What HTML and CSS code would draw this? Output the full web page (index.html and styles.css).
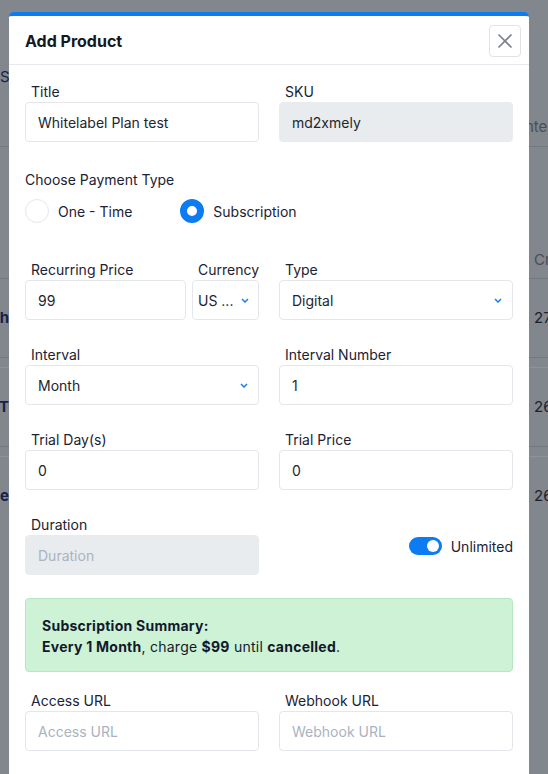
FILE: index.html
```html
<!DOCTYPE html>
<html lang="en">
<head>
  <meta charset="utf-8">
  <meta name="viewport" content="width=device-width, initial-scale=1">
  <title>Add Product</title>
  <link rel="stylesheet" href="styles.css">
</head>
<body>
  <!-- page behind the dialog, dimmed -->
  <div class="backdrop">
    <div class="bg-row row-s"><span class="bg-start">Se</span></div>
    <div class="bg-row row-nte"><span></span><span class="bg-right wide muted">nte</span></div>
    <div class="bg-line line-1"></div>
    <div class="bg-row row-head"><span></span><span class="bg-right muted">Cr</span></div>
    <div class="bg-line line-2"></div>
    <div class="bg-row row-data"><span class="bg-left"><span>Growth</span></span><span class="bg-right">27</span></div>
    <div class="bg-line line-3"></div>
    <div class="bg-line line-4"></div>
    <div class="bg-row row-data2"><span class="bg-left"><span>Test T</span></span><span class="bg-right">26</span></div>
    <div class="bg-line line-3"></div>
    <div class="bg-line line-4"></div>
    <div class="bg-row row-data2"><span class="bg-left"><span>Free</span></span><span class="bg-right">26</span></div>
  </div>

  <div class="modal">
    <div class="modal-header">
      <h2 class="modal-title">Add Product</h2>
      <button class="close-btn" aria-label="Close">
        <svg width="16" height="16" viewBox="0 0 16 16"><path d="M1.5 1.5 L14.5 14.5 M14.5 1.5 L1.5 14.5" stroke="#7b8189" stroke-width="1.6" fill="none"/></svg>
      </button>
    </div>

    <div class="modal-body">
      <div class="grid-2">
        <div class="field">
          <label class="label">Title</label>
          <div class="input">Whitelabel Plan test</div>
        </div>
        <div class="field">
          <label class="label">SKU</label>
          <div class="input disabled">md2xmely</div>
        </div>
      </div>

      <div class="payment">
        <div class="label flush">Choose Payment Type</div>
        <div class="radios">
          <div class="radio-item"><span class="radio"></span>One - Time</div>
          <div class="radio-item"><span class="radio checked"></span>Subscription</div>
        </div>
      </div>

      <div class="grid-2 row row-first">
        <div class="price-row">
          <div class="field grow">
            <label class="label">Recurring Price</label>
            <div class="input">99</div>
          </div>
          <div class="field currency">
            <label class="label">Currency</label>
            <div class="input select small">US ...
              <svg class="chev" width="8" height="5" viewBox="0 0 8 5"><path d="M1 1 L4 4 L7 1" stroke="#1a7df0" stroke-width="1.5" fill="none"/></svg>
            </div>
          </div>
        </div>
        <div class="field">
          <label class="label">Type</label>
          <div class="input select">Digital
            <svg class="chev" width="8" height="5" viewBox="0 0 8 5"><path d="M1 1 L4 4 L7 1" stroke="#1a7df0" stroke-width="1.5" fill="none"/></svg>
          </div>
        </div>
      </div>

      <div class="grid-2 row">
        <div class="field">
          <label class="label">Interval</label>
          <div class="input select">Month
            <svg class="chev" width="8" height="5" viewBox="0 0 8 5"><path d="M1 1 L4 4 L7 1" stroke="#1a7df0" stroke-width="1.5" fill="none"/></svg>
          </div>
        </div>
        <div class="field">
          <label class="label">Interval Number</label>
          <div class="input">1</div>
        </div>
      </div>

      <div class="grid-2 row">
        <div class="field">
          <label class="label">Trial Day(s)</label>
          <div class="input">0</div>
        </div>
        <div class="field">
          <label class="label">Trial Price</label>
          <div class="input">0</div>
        </div>
      </div>

      <div class="grid-2 row">
        <div class="field">
          <label class="label">Duration</label>
          <div class="input disabled placeholder">Duration</div>
        </div>
        <div class="toggle-wrap">
          <span class="toggle"><span class="knob"></span></span>
          <span class="toggle-text">Unlimited</span>
        </div>
      </div>

      <div class="summary">
        <div class="summary-title">Subscription Summary:</div>
        <div><b>Every 1 Month</b>, charge <b>$99</b> until <b>cancelled</b>.</div>
      </div>

      <div class="grid-2 row-url">
        <div class="field">
          <label class="label">Access URL</label>
          <div class="input placeholder">Access URL</div>
        </div>
        <div class="field">
          <label class="label">Webhook URL</label>
          <div class="input placeholder">Webhook URL</div>
        </div>
      </div>
    </div>
  </div>
</body>
</html>
```

FILE: styles.css
```css
body {
  margin: 0;
  width: 548px;
  height: 774px;
  overflow: hidden;
  background-color: #82868d;
  font-family: Inter, "Noto Sans", sans-serif;
  font-size: 14px;
  color: #1e2430;
  position: relative;
}

/* dimmed page behind */
.backdrop {
  display: flex;
  flex-direction: column;
  color: #14192e;
  font-size: 15px;
}
.bg-row {
  display: flex;
  justify-content: space-between;
  height: 22px;
  line-height: 22px;
}
.bg-start {
  width: 9px;
  overflow: hidden;
  white-space: nowrap;
  color: #17224a;
}
.bg-left {
  width: 9px;
  overflow: hidden;
  display: flex;
  justify-content: flex-end;
  white-space: nowrap;
  font-weight: 700;
  color: #17224a;
}
.bg-left span { flex-shrink: 0; }
.bg-right {
  width: 14px;
  white-space: nowrap;
  overflow: hidden;
  color: #1c2030;
}
.bg-right.wide { width: 23px; }
.muted { color: #4a4e56; }
.row-s { margin-top: 66px; }
.row-nte { margin-top: 28px; }
.bg-line {
  height: 1px;
  background: #73777e;
}
.line-1 { margin-top: 8px; }
.row-head { margin-top: 102px; }
.line-2 { margin-top: 7px; }
.row-data { margin-top: 28px; }
.line-3 { margin-top: 28px; }
.line-4 { margin-top: 9px; background: #8d9198; }
.row-data2 { margin-top: 28px; }

/* dialog */
.modal {
  position: absolute;
  left: 9px;
  top: 12px;
  width: 520px;
  height: 758px;
  overflow: hidden;
  background: #fff;
  border-top: 4px solid #0d7cf2;
  border-radius: 5px 5px 0 0;
}
.modal-header {
  height: 48px;
  display: flex;
  align-items: center;
  justify-content: space-between;
  padding: 0 8px 0 16px;
  border-bottom: 1px solid #e6e9ee;
}
.modal-title {
  margin: 0;
  padding-top: 2px;
  font-size: 16px;
  font-weight: 700;
  color: #16181d;
}
.close-btn {
  width: 32px;
  height: 32px;
  margin-top: 2px;
  border: 1px solid #dfe2e7;
  border-radius: 4px;
  background: #fff;
  display: flex;
  align-items: center;
  justify-content: center;
  padding: 0;
}

.modal-body {
  padding: 16px;
}
.grid-2 {
  display: grid;
  grid-template-columns: 1fr 1fr;
  column-gap: 20px;
}
.row { margin-top: 24px; }
.row-first { margin-top: 36px; }
.row-url { margin-top: 18px; }
.field {
  display: flex;
  flex-direction: column;
}
.label {
  display: block;
  height: 21px;
  line-height: 21px;
  padding-left: 6px;
  color: #1b2233;
  white-space: nowrap;
}
.label.flush { padding-left: 0; }
.input {
  height: 40px;
  box-sizing: border-box;
  border: 1px solid #e3e6eb;
  border-radius: 4px;
  padding: 0 12px;
  display: flex;
  align-items: center;
  color: #22262d;
  font-size: 14px;
  white-space: nowrap;
}
.input.disabled {
  background: #e9ecef;
  border-color: #e9ecef;
}
.input.placeholder { color: #a9b3c1; }
.select {
  justify-content: space-between;
  padding-right: 10px;
}
.select.small {
  padding-left: 5px;
  padding-right: 9px;
}

.price-row {
  display: flex;
  gap: 6px;
}
.grow { flex: 1; }
.currency { width: 67px; }

.payment { margin-top: 27px; }
.radios {
  display: flex;
  margin-top: 9px;
}
.radio-item {
  display: flex;
  align-items: center;
  gap: 9px;
  height: 24px;
  margin-right: 48px;
  color: #1b2233;
}
.radio {
  width: 24px;
  height: 24px;
  box-sizing: border-box;
  border: 1px solid #e4e6ea;
  border-radius: 50%;
}
.radio.checked {
  border: 7px solid #0d7cf2;
}

.toggle-wrap {
  display: flex;
  align-items: center;
  justify-content: flex-end;
  gap: 9px;
  padding-top: 3px;
  color: #1b2233;
}
.toggle {
  width: 33px;
  height: 18px;
  background: #0d7cf2;
  border-radius: 9px;
  display: flex;
  align-items: center;
  justify-content: flex-end;
  padding-right: 3px;
  box-sizing: border-box;
}
.knob {
  width: 12px;
  height: 12px;
  border-radius: 50%;
  background: #fff;
}

.summary {
  margin-top: 23px;
  background: #cef2d6;
  border: 1px solid #b7e7c2;
  border-radius: 4px;
  padding: 16px 16px 14px;
  line-height: 21px;
  color: #111a2b;
  letter-spacing: 0.25px;
}
.summary-title { font-weight: 700; }
.summary b { font-weight: 700; }
```
